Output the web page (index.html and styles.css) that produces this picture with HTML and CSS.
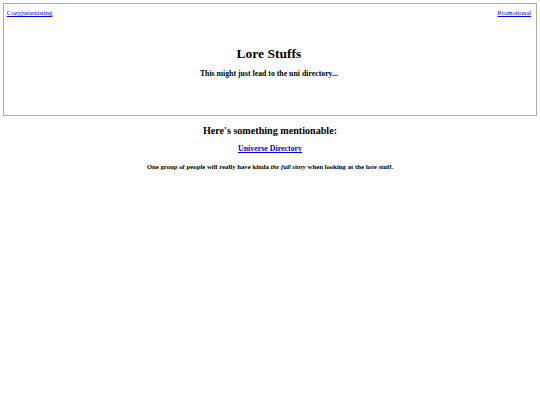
FILE: index.html
```html
<!DOCTYPE html>
<html lang="en">
<head>
<meta charset="utf-8">
<title>Lore Stuffs</title>
<link rel="stylesheet" href="styles.css">
</head>
<body>
<header class="banner">
  <nav class="topnav">
    <a href="#" class="navlink">Cozyjustexisting</a>
    <a href="#" class="navlink">Promotional</a>
  </nav>
  <h1 class="title">Lore Stuffs</h1>
  <h3 class="subtitle">This might just lead to the uni directory...</h3>
</header>
<main class="content">
  <h2 class="section-title">Here's something mentionable:</h2>
  <h3 class="dir-link"><a href="#">Universe Directory</a></h3>
  <p class="note">One group of people will really have kinda <em>the full story</em> when looking at the lore stuff.</p>
</main>
</body>
</html>
```

FILE: styles.css
```css
html, body {
  background: #ffffff;
}
body {
  margin: 3.4px;
  font-family: "Liberation Serif", "Times New Roman", serif;
  color: #000;
}
a {
  color: #0000ee;
}
.banner {
  border: 1px solid #ababab;
  height: 112.5px;
  box-sizing: border-box;
  padding: 5px 4.5px 0 2.3px;
  text-align: center;
}
.topnav {
  display: flex;
  justify-content: space-between;
  font-size: 6.8px;
  line-height: 1.15;
}
.title {
  font-size: 13.5px;
  line-height: 1.15;
  margin: 28.5px 0 0;
  font-weight: bold;
}
.subtitle {
  font-size: 7.8px;
  line-height: 1.15;
  margin: 9px 0 0;
  font-weight: bold;
}
.content {
  text-align: center;
}
.section-title {
  font-size: 10.125px;
  line-height: 1.15;
  margin: 9.4px 0 0;
}
.dir-link {
  font-size: 7.9px;
  line-height: 1.15;
  margin: 7.4px 0 0;
}
.note {
  font-size: 6.75px;
  line-height: 1.15;
  margin: 9.4px 0 0;
  font-weight: bold;
}
```
